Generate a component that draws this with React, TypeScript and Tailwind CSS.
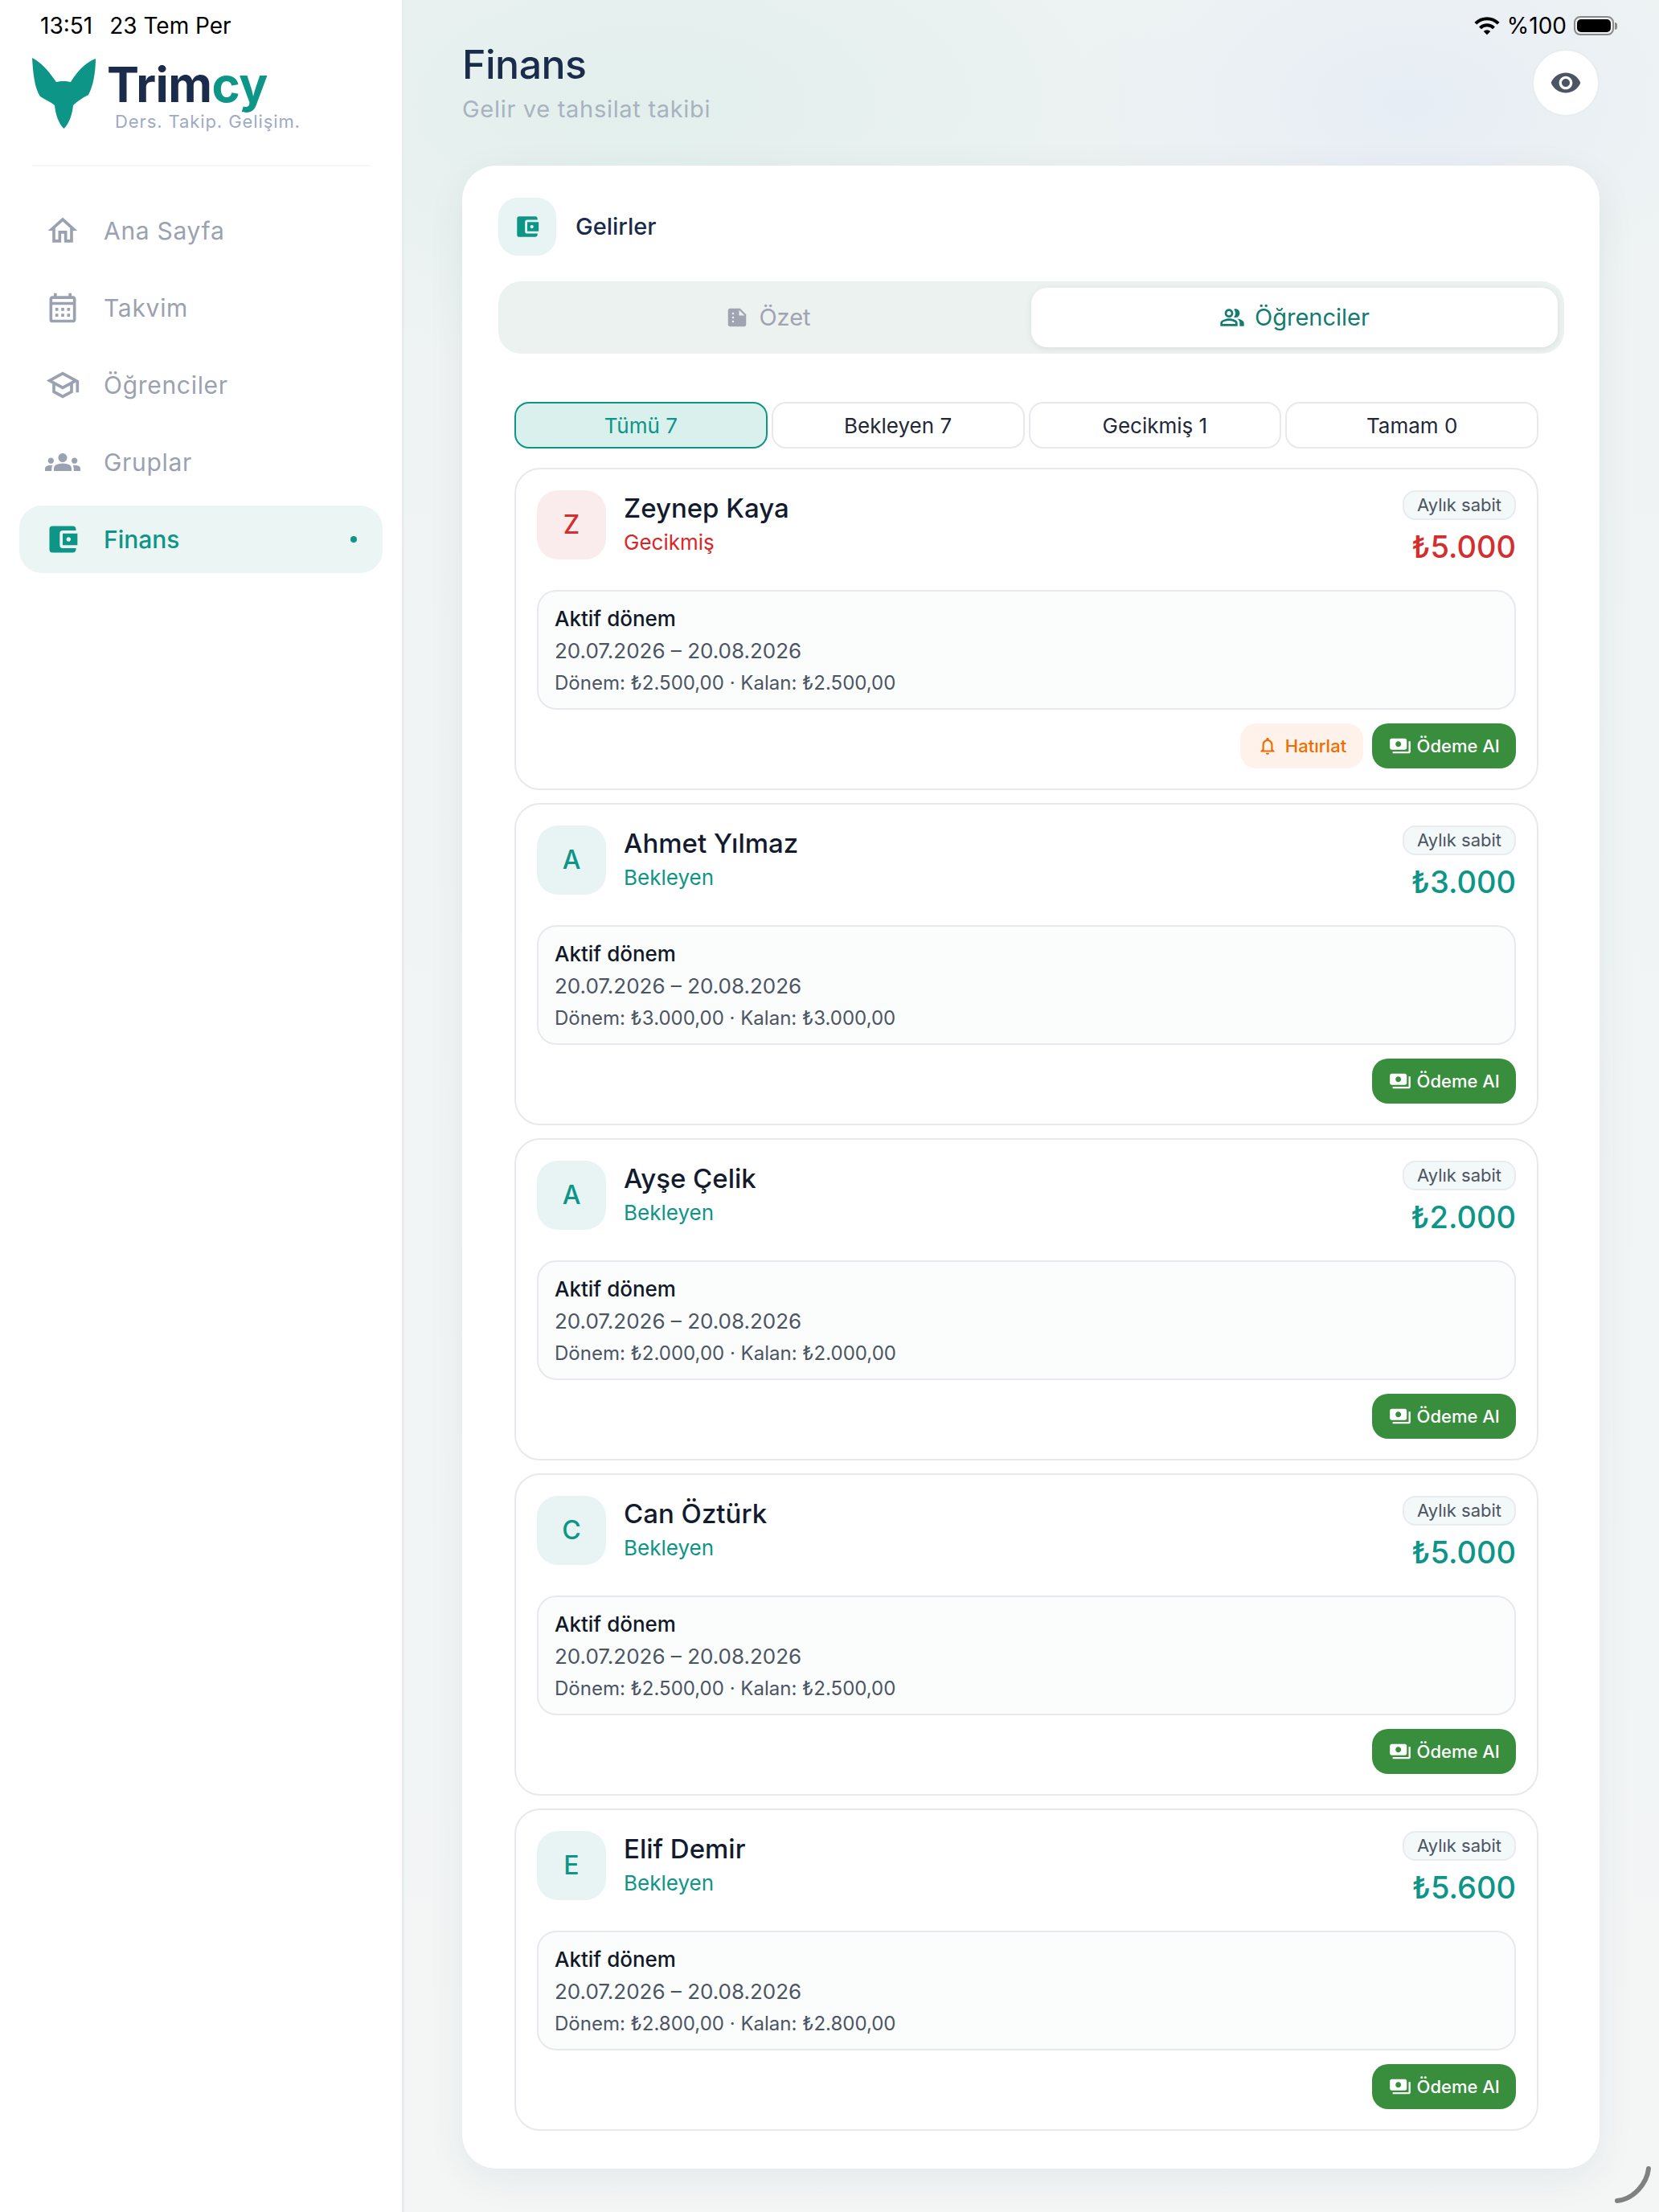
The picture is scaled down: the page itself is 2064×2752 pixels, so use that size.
import React from "react";
import {
  MdOutlineHome,
  MdOutlineCalendarMonth,
  MdOutlineSchool,
  MdGroups,
  MdAccountBalanceWallet,
  MdSummarize,
  MdOutlinePeopleAlt,
  MdVisibility,
  MdWifi,
  MdOutlineNotifications,
  MdPayments,
} from "react-icons/md";

const students = [
  { name: "Zeynep Kaya", status: "Gecikmiş", amount: "₺5.000", period: "₺2.500,00", late: true },
  { name: "Ahmet Yılmaz", status: "Bekleyen", amount: "₺3.000", period: "₺3.000,00", late: false },
  { name: "Ayşe Çelik", status: "Bekleyen", amount: "₺2.000", period: "₺2.000,00", late: false },
  { name: "Can Öztürk", status: "Bekleyen", amount: "₺5.000", period: "₺2.500,00", late: false },
  { name: "Elif Demir", status: "Bekleyen", amount: "₺5.600", period: "₺2.800,00", late: false },
];

const navItems = [
  { label: "Ana Sayfa", icon: MdOutlineHome },
  { label: "Takvim", icon: MdOutlineCalendarMonth },
  { label: "Öğrenciler", icon: MdOutlineSchool },
  { label: "Gruplar", icon: MdGroups },
];

const filters = ["Tümü 7", "Bekleyen 7", "Gecikmiş 1", "Tamam 0"];

const StatusBar = () => (
  <>
    <div className="absolute left-[50px] top-[14px] flex gap-[21px] text-[28px] leading-[36px] text-black">
      <span>13:51</span>
      <span>23 Tem Per</span>
    </div>
    <div className="absolute right-[52px] top-[14px] flex items-center text-[28px] leading-[36px] text-black">
      <MdWifi className="mr-[8px] h-[34px] w-[34px]" />
      <span>%100</span>
      <div className="ml-[9px] flex items-center">
        <div className="flex h-[24px] w-[50px] rounded-[8px] border-2 border-[#8a8a8a] p-[2px]">
          <div className="flex-1 rounded-[5px] bg-black" />
        </div>
        <div className="ml-[1px] h-[9px] w-[3px] rounded-r-full bg-[#8a8a8a]" />
      </div>
    </div>
  </>
);

const Sidebar = () => (
  <aside className="w-[503px] shrink-0 border-r-[3px] border-[#e9ecee] bg-white">
    {/* Logo */}
    <div className="flex px-[40px] pt-[72px]">
      <svg viewBox="0 0 80 88" className="h-[88px] w-[80px] shrink-0">
        <path
          d="M0 0C10 5 18 13 30 30C35 28.500 43 28.500 48 30C58 14 68 5 79 1C79 17 76 35 70 46C62 50 56 54 51 59C50 70 46 82 39.500 88C33 82 29 70 28 59C22 54 16 52 10 48C3 38 1 18 0 0Z"
          fill="#0d9587"
        />
      </svg>
      <div className="ml-[13px]">
        <div className="text-[60px] font-bold leading-[66px] tracking-[-0.5px] text-[#1a2b4b]">
          Trim<span className="text-[#0d9587]">cy</span>
        </div>
        <div className="ml-[10px] mt-[-1px] text-[22px] leading-[28px] tracking-[0.9px] text-[#9dabc4]">
          Ders. Takip. Gelişim.
        </div>
      </div>
    </div>
    <div className="mx-[40px] mt-[40px] h-[2px] bg-[#f3f5f6]" />

    {/* Navigation */}
    <nav className="mt-[38px] flex flex-col gap-[12px] px-[24px]">
      {navItems.map((item) => (
        <div key={item.label} className="flex h-[84px] items-center text-[#9aa2b1]">
          <item.icon className="ml-[32px] h-[44px] w-[44px] shrink-0" />
          <span className="ml-[29px] text-[30px] tracking-[0.7px]">{item.label}</span>
        </div>
      ))}
      <div className="flex h-[84px] items-center rounded-[28px] bg-[#ebf5f3] text-[#0d9587]">
        <MdAccountBalanceWallet className="ml-[32px] h-[44px] w-[44px] shrink-0" />
        <span className="ml-[29px] text-[30px] font-medium">Finans</span>
        <div className="ml-auto mr-[32px] h-[8px] w-[8px] rounded-full bg-[#0d9587]" />
      </div>
    </nav>
  </aside>
);

const StudentCard = ({ student }: { student: (typeof students)[number] }) => (
  <div className="shrink-0 rounded-[32px] border-2 border-[#e8e8ee] bg-white px-[26px] pb-[25px] pt-[26px]">
    <div className="flex h-[86px]">
      <div
        className={`flex h-[86px] w-[86px] shrink-0 items-center justify-center rounded-[26px] text-[32px] font-medium ${
          student.late ? "bg-[#faecec] text-[#d32f2f]" : "bg-[#e8f4f3] text-[#0d9587]"
        }`}
      >
        {student.name[0]}
      </div>
      <div className="ml-[22px] flex-1">
        <div className="mt-[2px] text-[33px] font-medium leading-[40px] text-[#131b2e]">{student.name}</div>
        <div
          className={`mt-[6px] text-[26px] leading-[34px] ${
            student.late ? "text-[#dc2626]" : "text-[#0d9587]"
          }`}
        >
          {student.status}
        </div>
      </div>
      <div className="flex flex-col items-end">
        <div className="flex h-[48px] w-[141px] items-center justify-center rounded-[16px] border-2 border-[#e8ebef] bg-[#f3f8f8] text-[22px] text-[#4b5563]">
          Aylık sabit
        </div>
        <div
          className={`mt-[11px] text-[38px] font-medium leading-[44px] ${
            student.late ? "text-[#d32f2f]" : "text-[#0d9587]"
          }`}
        >
          {student.amount}
        </div>
      </div>
    </div>

    <div className="mt-[38px] h-[149px] rounded-[24px] border-2 border-[#e8e8ee] bg-[#fbfcfc] px-[20px] pt-[16px]">
      <div className="text-[26px] font-medium leading-[36px] text-[#111827]">Aktif dönem</div>
      <div className="mt-[4px] text-[26px] leading-[36px] text-[#4b5563]">20.07.2026 – 20.08.2026</div>
      <div className="mt-[4px] text-[24px] leading-[36px] text-[#4b5563]">
        Dönem: {student.period} · Kalan: {student.period}
      </div>
    </div>

    <div className="mt-[17px] flex justify-end gap-[11px]">
      {student.late && (
        <div className="flex h-[56px] w-[153px] items-center justify-center rounded-[20px] bg-[#fef2ea] text-[22px] font-medium text-[#ef6c00]">
          <MdOutlineNotifications className="mr-[9px] h-[26px] w-[26px]" />
          Hatırlat
        </div>
      )}
      <div className="flex h-[56px] w-[179px] items-center justify-center rounded-[20px] bg-[#388e3c] text-[22px] font-medium text-white">
        <MdPayments className="mr-[7px] h-[28px] w-[28px]" />
        Ödeme Al
      </div>
    </div>
  </div>
);

export default function App() {
  return (
    <div className="relative flex h-[2752px] w-[2064px] overflow-hidden bg-white font-['Inter',sans-serif]">
      <StatusBar />
      <Sidebar />

      <main className="flex min-w-0 flex-1 flex-col bg-[radial-gradient(ellipse_420px_260px_at_1250px_130px,#e7edf5_0%,transparent_100%),radial-gradient(ellipse_700px_340px_at_300px_130px,#e2efec_0%,transparent_100%),linear-gradient(180deg,#eef3f3_0%,#f4f6f6_100%)] pb-[54px] pl-[72px] pr-[74px] pt-[50px]">
        <header className="flex h-[106px] shrink-0 items-start justify-between">
          <div>
            <h1 className="text-[50px] font-medium leading-[60px] tracking-[-0.5px] text-[#1a2b4b]">Finans</h1>
            <p className="mt-[6px] text-[29px] leading-[40px] tracking-[0.7px] text-[#a8b2c0]">
              Gelir ve tahsilat takibi
            </p>
          </div>
          <button className="mt-[11px] flex h-[84px] w-[84px] items-center justify-center rounded-full border-2 border-[#e8eeee] bg-white text-[#4b5563]">
            <MdVisibility className="h-[40px] w-[40px]" />
          </button>
        </header>

        <section className="mt-[50px] flex min-h-0 flex-1 flex-col rounded-[42px] bg-white pb-[45px] pl-[45px] pr-[44px] pt-[40px] shadow-[0_12px_48px_rgba(0,60,50,0.07)]">
          <div className="flex shrink-0 items-center">
            <div className="flex h-[72px] w-[72px] items-center justify-center rounded-[24px] bg-[#e8f4f3] text-[#0d9587]">
              <MdAccountBalanceWallet className="h-[34px] w-[34px]" />
            </div>
            <h2 className="ml-[24px] text-[29px] font-medium text-[#1a2b4b]">Gelirler</h2>
          </div>

          <div className="mt-[32px] grid h-[90px] shrink-0 grid-cols-2 rounded-[28px] bg-[#ecf2f0] p-[8px]">
            <div className="flex items-center justify-center text-[29px] text-[#a0a3b0]">
              <MdSummarize className="mr-[12px] h-[30px] w-[30px]" />
              Özet
            </div>
            <div className="flex items-center justify-center rounded-[20px] bg-white text-[29px] text-[#137b6f] shadow-[0_2px_8px_rgba(0,0,0,0.08)]">
              <MdOutlinePeopleAlt className="mr-[12px] h-[32px] w-[32px]" />
              Öğrenciler
            </div>
          </div>

          <div className="mt-[60px] flex min-h-0 flex-1 flex-col overflow-hidden pl-[20px] pr-[32px]">
            <div className="flex shrink-0 gap-[5px]">
              {filters.map((label, i) => (
                <div
                  key={label}
                  className={`flex h-[58px] flex-1 items-center justify-center rounded-[18px] border-2 text-[26px] ${
                    i === 0
                      ? "border-[#0d9587] bg-[#daf0ec] text-[#0d9587]"
                      : "border-[#e8e8ee] bg-white text-[#1f2937]"
                  }`}
                >
                  {label}
                </div>
              ))}
            </div>
            <div className="mt-[24px] flex flex-col gap-[16px]">
              {students.map((s) => (
                <StudentCard key={s.name} student={s} />
              ))}
            </div>
          </div>
        </section>
      </main>

      {/* Apple Pencil corner indicator */}
      <svg viewBox="0 0 50 50" className="absolute bottom-[8px] right-[8px] h-[50px] w-[50px]">
        <path d="M45 4C43 22 27 42 6 44" fill="none" stroke="#808080" strokeWidth="6" strokeLinecap="round" />
      </svg>
    </div>
  );
}
